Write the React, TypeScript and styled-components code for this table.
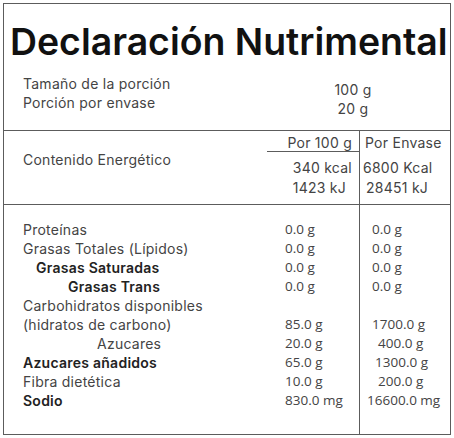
import React from "react";
import styled, { createGlobalStyle } from "styled-components";

const GlobalStyle = createGlobalStyle`
  html, body {
    margin: 0;
    padding: 0;
    background: #fff;
  }
  body {
    font-family: "Inter", "Liberation Sans", sans-serif;
    color: #444;
  }
`;

const LINE = "#5c5c5c";

const Panel = styled.div`
  box-sizing: border-box;
  margin: 3px 0 0 3px;
  width: 448px;
  height: 432px;
  border: 1px solid ${LINE};
  display: flex;
  flex-direction: column;
`;

const Header = styled.div`
  box-sizing: border-box;
  height: 127px;
  border-bottom: 1px solid ${LINE};
  padding-top: 18px;
`;

const Title = styled.h1`
  margin: 0 0 0 6px;
  font-family: "Inter", "Liberation Sans", sans-serif;
  font-weight: 600;
  font-size: 37.4px;
  line-height: 40px;
  color: #111;
  white-space: nowrap;
`;

const Serving = styled.div`
  display: grid;
  grid-template-columns: 310px auto;
  margin-top: 12px;
  padding-left: 19px;
  font-size: 14px;
  letter-spacing: 0.25px;
  line-height: 19px;
`;

const ServingLabels = styled.div`
  display: flex;
  flex-direction: column;
`;

const ServingValues = styled.div`
  display: flex;
  flex-direction: column;
  align-items: center;
  width: 40px;
  padding-top: 6px;
`;

// a column rule drawn as background so it runs through the section padding
const Section = styled.div<{ $grow?: boolean }>`
  box-sizing: border-box;
  background-image: linear-gradient(${LINE}, ${LINE});
  background-size: 1px 100%;
  background-position: 355px 0;
  background-repeat: no-repeat;
  ${(p) => (p.$grow ? "flex: 1;" : "height: 74px; border-bottom: 1px solid " + LINE + ";")}
`;

const EnergyGrid = styled.div`
  display: grid;
  grid-template-columns: 263px 92px 1fr;
  font-size: 14px;
  letter-spacing: 0.25px;
`;

const EnergyLabel = styled.div`
  grid-row: 1 / span 3;
  padding: 19px 0 0 19px;
  line-height: 20px;
`;

const HeadCell = styled.div<{ $right?: boolean }>`
  padding-top: 4px;
  line-height: 16px;
  text-align: ${(p) => (p.$right ? "right" : "left")};
  padding-right: ${(p) => (p.$right ? "7px" : "0")};
  padding-left: ${(p) => (p.$right ? "0" : "6px")};
  border-bottom: 1px solid ${(p) => (p.$right ? LINE : "transparent")};
  white-space: nowrap;
`;

const EnergyCell = styled.div<{ $right?: boolean; $first?: boolean; $shift?: number }>`
  line-height: 20px;
  padding-top: ${(p) => (p.$first ? "6px" : "0")};
  text-align: ${(p) => (p.$right ? "right" : "left")};
  padding-right: ${(p) => (p.$right ? `${7 + (p.$shift ?? 0)}px` : "0")};
  padding-left: ${(p) => (p.$right ? "0" : `${4 + (p.$shift ?? 0)}px`)};
  white-space: nowrap;
`;

const NutrientList = styled.div`
  padding-top: 15px;
`;

const Row = styled.div`
  display: grid;
  grid-template-columns: 281px 75px 1fr;
  font-size: 14px;
  line-height: 19px;
`;

const Label = styled.div<{ $indent: number; $bold?: boolean }>`
  padding-left: ${(p) => p.$indent}px;
  font-weight: ${(p) => (p.$bold ? 600 : 400)};
  letter-spacing: 0.25px;
  color: ${(p) => (p.$bold ? "#222" : "#444")};
  white-space: nowrap;
`;

const Value = styled.div<{ $pad?: number }>`
  font-family: "Open Sans", "Noto Sans", sans-serif;
  font-size: 13.5px;
  color: #444;
  padding-left: ${(p) => p.$pad ?? 0}px;
  white-space: nowrap;
`;

type Nutrient = {
  name: string;
  indent: number;
  bold?: boolean;
  per100?: string;
  envase?: string;
  shift?: number;
};

const nutrients: Nutrient[] = [
  { name: "Proteínas", indent: 19, per100: "0.0 g", envase: "0.0 g" },
  { name: "Grasas Totales (Lípidos)", indent: 19, per100: "0.0 g", envase: "0.0 g" },
  { name: "Grasas Saturadas", indent: 32, bold: true, per100: "0.0 g", envase: "0.0 g" },
  { name: "Grasas Trans", indent: 64, bold: true, per100: "0.0 g", envase: "0.0 g" },
  { name: "Carbohidratos disponibles", indent: 19 },
  { name: "(hidratos de carbono)", indent: 19, per100: "85.0 g", envase: "1700.0 g" },
  { name: "Azucares", indent: 93, per100: "20.0 g", envase: "400.0 g", shift: 6 },
  { name: "Azucares añadidos", indent: 19, bold: true, per100: "65.0 g", envase: "1300.0 g", shift: 3 },
  { name: "Fibra dietética", indent: 19, per100: "10.0 g", envase: "200.0 g", shift: 6 },
  { name: "Sodio", indent: 19, bold: true, per100: "830.0 mg", envase: "16600.0 mg", shift: -5 },
];

export default function App() {
  return (
    <>
      <GlobalStyle />
      <Panel>
        <Header>
          <Title>Declaración Nutrimental</Title>
          <Serving>
            <ServingLabels>
              <span>Tamaño de la porción</span>
              <span>Porción por envase</span>
            </ServingLabels>
            <ServingValues>
              <span>100 g</span>
              <span>20 g</span>
            </ServingValues>
          </Serving>
        </Header>

        <Section>
          <EnergyGrid>
            <EnergyLabel>Contenido Energético</EnergyLabel>
            <HeadCell $right>Por 100 g</HeadCell>
            <HeadCell>Por Envase</HeadCell>
            <EnergyCell $right $first>340 kcal</EnergyCell>
            <EnergyCell $first>6800 Kcal</EnergyCell>
            <EnergyCell $right $shift={6}>1423 kJ</EnergyCell>
            <EnergyCell $shift={3}>28451 kJ</EnergyCell>
          </EnergyGrid>
        </Section>

        <Section $grow>
          <NutrientList>
            {nutrients.map((n) => (
              <Row key={n.name}>
                <Label $indent={n.indent} $bold={n.bold}>
                  {n.name}
                </Label>
                <Value>{n.per100}</Value>
                <Value $pad={12 + (n.shift ?? 0)}>{n.envase}</Value>
              </Row>
            ))}
          </NutrientList>
        </Section>
      </Panel>
    </>
  );
}
